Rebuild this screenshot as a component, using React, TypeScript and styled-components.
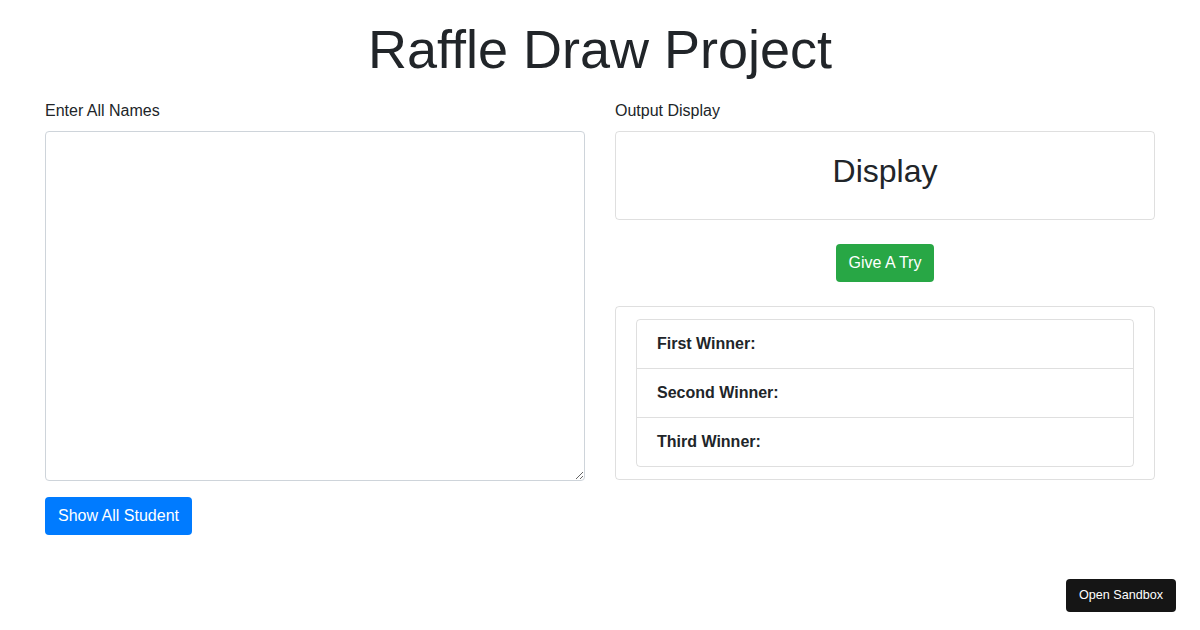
import React from "react";
import styled, { createGlobalStyle } from "styled-components";

const GlobalStyle = createGlobalStyle`
  *, *::before, *::after { box-sizing: border-box; }
  body {
    margin: 0;
    font-family: "Liberation Sans", Arial, sans-serif;
    font-size: 16px;
    line-height: 1.5;
    color: #212529;
    background: #fff;
  }
`;

const Container = styled.div`
  width: 1140px;
  margin: 0 auto;
  padding: 0 15px;
`;

const Title = styled.h1`
  margin: 17px 0 17px;
  font-size: 54px;
  font-weight: 400;
  line-height: 1.2;
  text-align: center;
`;

const Row = styled.div`
  display: grid;
  grid-template-columns: 1fr 1fr;
  column-gap: 30px;
`;

const Column = styled.div`
  display: flex;
  flex-direction: column;
`;

const Label = styled.label`
  display: block;
  margin-bottom: 8px;
`;

const NamesInput = styled.textarea`
  display: block;
  width: 100%;
  height: 350px;
  padding: 6px 12px;
  font: inherit;
  color: #495057;
  border: 1px solid #ced4da;
  border-radius: 4px;
  margin-bottom: 16px;
`;

const Button = styled.button<{ $variant: "primary" | "success" }>`
  display: inline-block;
  align-self: ${(p) => (p.$variant === "success" ? "center" : "flex-start")};
  padding: 6px 12px;
  font: inherit;
  line-height: 1.5;
  color: #fff;
  border: 1px solid transparent;
  border-radius: 4px;
  background: ${(p) => (p.$variant === "success" ? "#28a745" : "#007bff")};
  cursor: pointer;
`;

const Card = styled.div<{ $pad?: string }>`
  border: 1px solid rgba(0, 0, 0, 0.125);
  border-radius: 4px;
  padding: ${(p) => p.$pad ?? "20px"};
`;

const DisplayText = styled.h2`
  margin: 0 0 9px;
  font-size: 32px;
  font-weight: 400;
  line-height: 1.2;
  text-align: center;
`;

const ButtonArea = styled.div`
  display: flex;
  justify-content: center;
  padding: 24px 0;
`;

const List = styled.ul`
  list-style: none;
  margin: 0;
  padding: 0;
  border: 1px solid rgba(0, 0, 0, 0.125);
  border-radius: 4px;
`;

const ListItem = styled.li`
  padding: 12px 20px;
  font-weight: 700;
  & + & {
    border-top: 1px solid rgba(0, 0, 0, 0.125);
  }
`;

const SandboxLink = styled.a`
  position: fixed;
  right: 24px;
  bottom: 18px;
  display: block;
  padding: 8px 13px;
  background: #151515;
  color: #fff;
  border-radius: 4px;
  font-size: 12.6px;
  line-height: 17px;
  text-decoration: none;
  font-family: "Liberation Sans", Arial, sans-serif;
`;

const winners = ["First Winner:", "Second Winner:", "Third Winner:"];

export default function App() {
  return (
    <>
      <GlobalStyle />
      <Container>
        <Title>Raffle Draw Project</Title>
        <Row>
          <Column>
            <Label htmlFor="names">Enter All Names</Label>
            <NamesInput id="names" />
            <Button $variant="primary">Show All Student</Button>
          </Column>
          <Column>
            <Label>Output Display</Label>
            <Card>
              <DisplayText>Display</DisplayText>
            </Card>
            <ButtonArea>
              <Button $variant="success">Give A Try</Button>
            </ButtonArea>
            <Card $pad="12px 20px">
              <List>
                {winners.map((w) => (
                  <ListItem key={w}>{w}</ListItem>
                ))}
              </List>
            </Card>
          </Column>
        </Row>
      </Container>
      <SandboxLink href="#">Open Sandbox</SandboxLink>
    </>
  );
}
